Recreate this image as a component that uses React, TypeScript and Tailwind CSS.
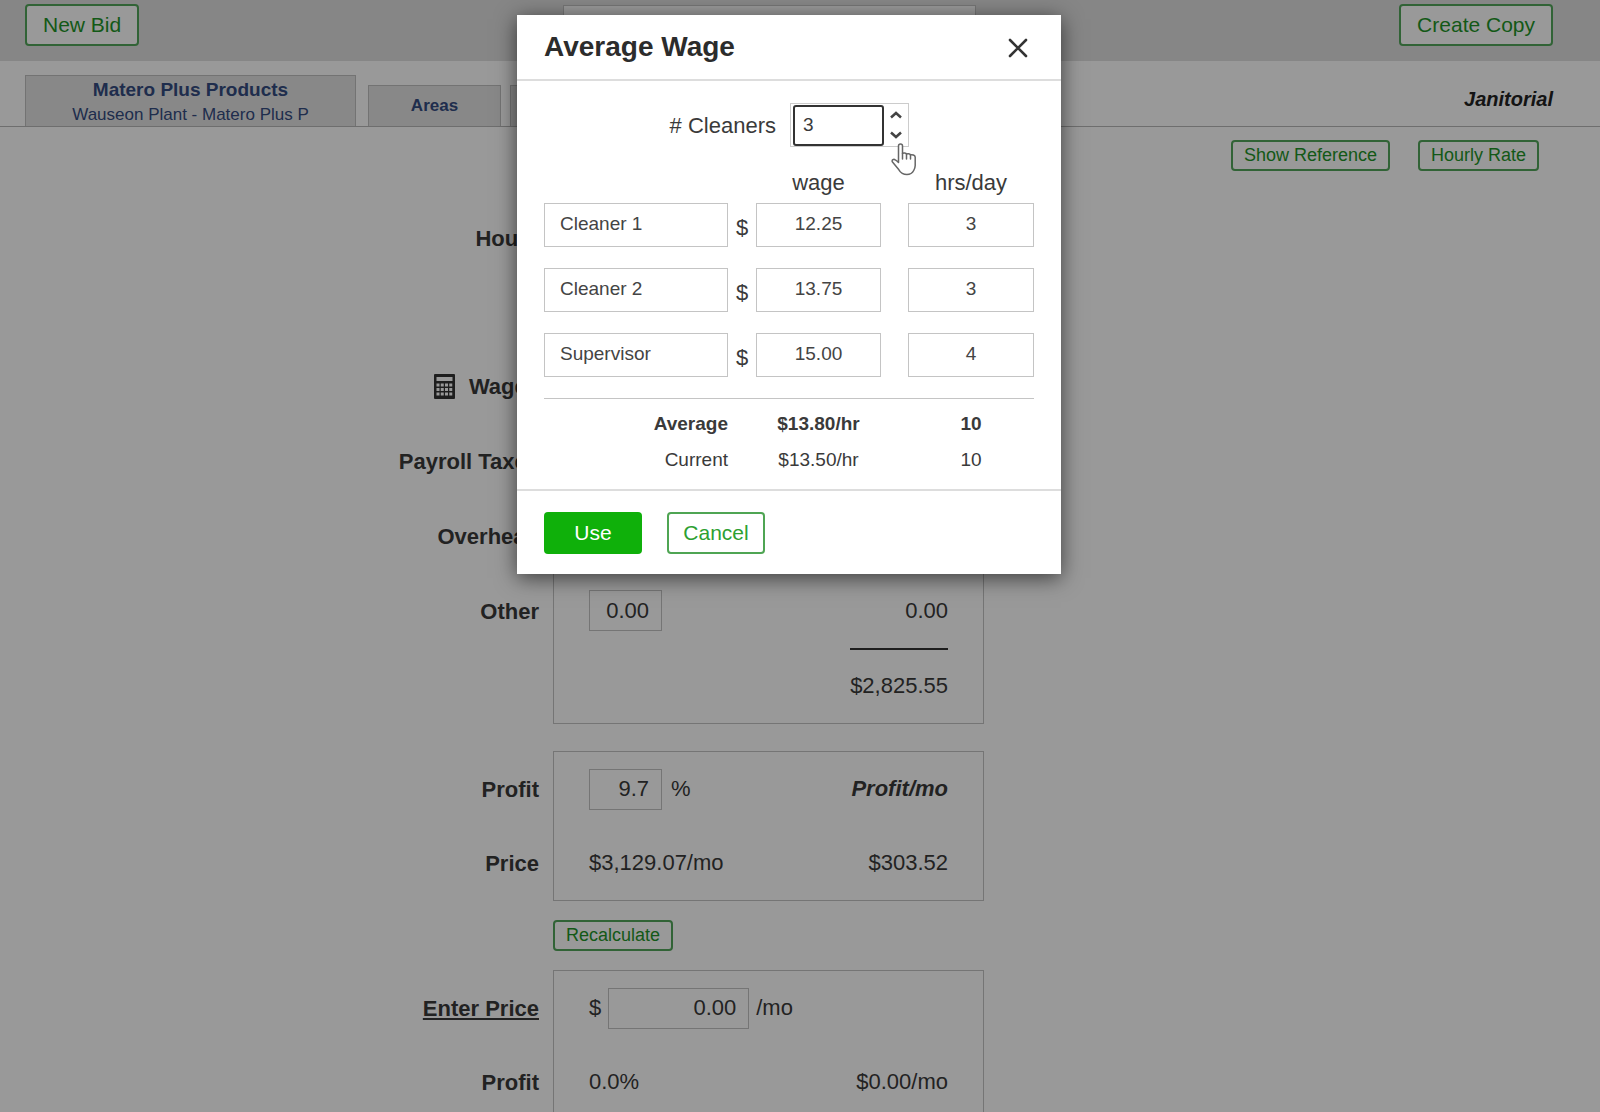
import React from "react";

const outline =
  "rounded border-2 border-[#53a65a] text-[#1f9428] bg-white font-normal whitespace-nowrap";

function SmallButton({ children }: { children: React.ReactNode }) {
  return <button className={`${outline} h-[31px] px-[11px] pb-[2px] text-[18px] leading-[24px]`}>{children}</button>;
}

function LargeButton({ children }: { children: React.ReactNode }) {
  return <button className={`${outline} h-[42px] px-4 text-[21px] leading-[30px]`}>{children}</button>;
}

function CalculatorIcon() {
  return (
    <svg width="21" height="25" viewBox="0 0 21 25" aria-hidden="true">
      <rect width="21" height="25" rx="1" fill="#333" />
      <g fill="#fff">
        <rect x="2.500" y="3" width="16" height="4" />
        {[9.5, 14, 18.5].map((y) =>
          [2.5, 6.75, 11, 15.25].map((x) => <rect key={`${x}-${y}`} x={x} y={y} width="3" height="3" />)
        )}
      </g>
    </svg>
  );
}

function Section({ labels, children }: { labels: React.ReactNode; children: React.ReactNode }) {
  return (
    <section className="grid grid-cols-[1fr_431px_1fr] pr-[63px]">
      <div className="flex flex-col py-px pr-[14px] text-right font-bold">{labels}</div>
      <div className="flex flex-col border border-[#c4c4c4] px-[35px]">{children}</div>
    </section>
  );
}

const boxInput = "h-[41px] border border-[#c4c4c4] bg-white px-3 text-right";

function Row({ children }: { children?: React.ReactNode }) {
  return <div className="flex h-[74px] items-center justify-between">{children}</div>;
}

function TallRow({ children }: { children?: React.ReactNode }) {
  return <div className="flex h-[75px] items-center justify-between">{children}</div>;
}

function BidPage() {
  return (
    <div className="text-[22px] leading-[30px] text-[#3a3a3a]">
      <header className="flex justify-between bg-[#dfdfdf] pt-1 pr-[47px] pb-[15px] pl-[25px]">
        <LargeButton>New Bid</LargeButton>
        <div className="mt-px w-[413px] border border-[#c4c4c4] bg-white" />
        <LargeButton>Create Copy</LargeButton>
      </header>

      <nav className="flex h-[66px] items-end border-b border-[#b8b8b8] pr-[47px] pl-[25px]">
        <a href="#bid" className="flex h-[51px] w-[331px] flex-col items-center border border-b-0 border-[#c0c0c0] bg-[#e3e3e3] text-[#344b80]">
          <span className="text-[19px] leading-[28px] font-bold">Matero Plus Products</span>
          <span className="text-[17px] leading-[22px] whitespace-nowrap">Wauseon Plant - Matero Plus P</span>
        </a>
        <a href="#areas" className="ml-3 flex h-[41px] w-[133px] items-center justify-center border border-b-0 border-[#c0c0c0] bg-[#e3e3e3] text-[17px] font-bold text-[#344b80]">
          Areas
        </a>
        <div className="ml-[9px] h-[41px] w-[133px] border border-b-0 border-[#c0c0c0] bg-[#e3e3e3]" />
        <span className="mb-3 ml-auto text-[20px] font-bold text-[#222] italic">Janitorial</span>
      </nav>

      <div className="flex justify-end gap-7 pt-[13px] pr-[61px] pb-[26px]">
        <SmallButton>Show Reference</SmallButton>
        <SmallButton>Hourly Rate</SmallButton>
      </div>

      <Section
        labels={
          <>
            <span className="h-[75px] pt-[26px]">Hours</span>
            <span className="h-[75px]" />
            <span className="flex h-[75px] items-center justify-end gap-[14px] pt-[2px]">
              <CalculatorIcon />
              Wages
            </span>
            <span className="h-[75px] pt-6">Payroll Taxes</span>
            <span className="h-[75px] pt-6">Overhead</span>
            <label htmlFor="other" className="h-[75px] pt-6">Other</label>
          </>
        }
      >
        <TallRow />
        <TallRow />
        <TallRow />
        <TallRow />
        <TallRow />
        <TallRow>
          <input id="other" className={`${boxInput} w-[73px]`} defaultValue="0.00" />
          <span>0.00</span>
        </TallRow>
        <div className="flex h-[75px] flex-col items-end">
          <div className="h-[2px] w-[98px] bg-[#333]" />
          <span className="mt-[21px]">$2,825.55</span>
        </div>
      </Section>

      <div className="h-[27px]" />

      <Section
        labels={
          <>
            <label htmlFor="profit" className="h-[74px] pt-[23px]">Profit</label>
            <span className="h-[74px] pt-[23px]">Price</span>
          </>
        }
      >
        <Row>
          <span className="flex items-center gap-[9px]">
            <input id="profit" className={`${boxInput} w-[73px]`} defaultValue="9.7" />%
          </span>
          <span className="font-bold italic">Profit/mo</span>
        </Row>
        <Row>
          <span>$3,129.07/mo</span>
          <span>$303.52</span>
        </Row>
      </Section>

      <div className="grid grid-cols-[1fr_431px_1fr] py-[19px] pr-[63px]">
        <div className="col-start-2 flex">
          <SmallButton>Recalculate</SmallButton>
        </div>
      </div>

      <Section
        labels={
          <>
            <label htmlFor="price" className="h-[74px] pt-[23px] underline">Enter Price</label>
            <span className="h-[74px] pt-[23px]">Profit</span>
          </>
        }
      >
        <Row>
          <span className="flex items-center gap-[7px]">
            $
            <input id="price" className={`${boxInput} w-[141px]`} defaultValue="0.00" />
            /mo
          </span>
        </Row>
        <Row>
          <span>0.0%</span>
          <span>$0.00/mo</span>
        </Row>
      </Section>
    </div>
  );
}

const cleaners = [
  { name: "Cleaner 1", wage: "12.25", hours: "3" },
  { name: "Cleaner 2", wage: "13.75", hours: "3" },
  { name: "Supervisor", wage: "15.00", hours: "4" },
];

const cellInput = "block h-11 w-full border border-[#c4c4c4] bg-white pb-[2px] text-[#444]";

function AverageWageDialog() {
  return (
    <div role="dialog" aria-labelledby="dialog-title" className="w-[544px] bg-white text-[#3a3a3a] shadow-[0_4px_20px_rgba(0,0,0,0.6)]">
      <div className="flex h-[66px] items-center justify-between border-b-2 border-[#ddd] pr-[33px] pl-[27px]">
        <h2 id="dialog-title" className="text-[28px] leading-[36px] font-bold text-[#2c2c2c]">Average Wage</h2>
        <button aria-label="Close" className="pt-[2px]">
          <svg width="20" height="20" viewBox="0 0 20 20" fill="none" stroke="#333" strokeWidth="2.600" strokeLinecap="round">
            <path d="M2 2 18 18M18 2 2 18" />
          </svg>
        </button>
      </div>

      <div className="px-[27px] pt-[22px] pb-[11px]">
        <div className="flex items-center justify-end gap-[14px] pr-[125px] text-[22px]">
          <label htmlFor="count">#&nbsp;Cleaners</label>
          <div className="relative flex h-[44px] w-[119px] items-center border border-[#ccc] pl-[2px]">
            <input id="count" className="h-[41px] w-[91px] rounded-[3px] border-2 border-[#333] px-2 text-[19px]" defaultValue="3" />
            <div className="flex flex-1 flex-col items-center gap-[6px]">
              <button aria-label="More cleaners" className="flex h-[14px] items-center">
                <svg width="12" height="8" viewBox="0 0 12 8" fill="none" stroke="#444" strokeWidth="2.500">
                  <path d="M1 6.500 6 2l5 4.500" />
                </svg>
              </button>
              <button aria-label="Fewer cleaners" className="flex h-[14px] items-center">
                <svg width="12" height="8" viewBox="0 0 12 8" fill="none" stroke="#444" strokeWidth="2.500">
                  <path d="M1 1.500 6 6l5-4.500" />
                </svg>
              </button>
            </div>
            <svg className="absolute top-[39px] left-[100px]" width="26" height="33" viewBox="0 0 26 33" fill="#fff" stroke="#666" strokeWidth="1.500" strokeLinejoin="round" strokeLinecap="round">
              <path d="M7.500 19.500V3a2 2 0 0 1 4 0v7.500c.7-.8 3.700-.7 4 .6.700-.7 3.500-.5 4 .8 1.500-.6 4.500.2 4.700 2.200v8.400c0 2-.7 3.500-1.500 5-1.500 3-3.500 4-6.800 4-4 0-6.200-1.600-8-4.700L1.300 18.800c-.7-1.800 1.200-3.100 3-2 1.400.8 2.300 1.700 3.200 2.700Z" />
              <path d="M11.500 10.500V16M15.500 11.100V16M19.500 11.900V16" fill="none" />
            </svg>
          </div>
        </div>

        <table className="w-full table-fixed border-collapse text-[19px] leading-[26px]">
          <colgroup>
            <col className="w-[184px]" />
            <col className="w-[28px]" />
            <col className="w-[125px]" />
            <col className="w-[27px]" />
            <col className="w-[126px]" />
          </colgroup>
          <thead>
            <tr className="h-[56px] text-[22px]">
              <td colSpan={2} />
              <th scope="col" className="pt-4 font-normal">wage</th>
              <td />
              <th scope="col" className="pt-4 font-normal">hrs/day</th>
            </tr>
          </thead>
          <tbody>
            {cleaners.map((c) => (
              <tr key={c.name} className="h-[65px] align-top">
                <td>
                  <input aria-label="Name" className={`${cellInput} px-[15px]`} defaultValue={c.name} />
                </td>
                <td className="pt-3 text-center text-[22px]">$</td>
                <td>
                  <input aria-label={`${c.name} wage`} className={`${cellInput} text-center`} defaultValue={c.wage} />
                </td>
                <td />
                <td>
                  <input aria-label={`${c.name} hours per day`} className={`${cellInput} text-center`} defaultValue={c.hours} />
                </td>
              </tr>
            ))}
          </tbody>
          <tfoot>
            <tr className="h-[44px] border-t border-[#c4c4c4] text-center font-bold">
              <th scope="row" className="pt-[7px] text-right">Average</th>
              <td />
              <td className="pt-[7px]">$13.80/hr</td>
              <td />
              <td className="pt-[7px]">10</td>
            </tr>
            <tr className="h-[36px] text-center">
              <th scope="row" className="text-right font-normal">Current</th>
              <td />
              <td>$13.50/hr</td>
              <td />
              <td>10</td>
            </tr>
          </tfoot>
        </table>
      </div>

      <div className="flex gap-[25px] border-t-2 border-[#ddd] px-[27px] pt-[21px] pb-5 text-[21px]">
        <button className="h-[42px] w-[98px] rounded bg-[#0fb00a] text-white">Use</button>
        <button className="h-[42px] w-[98px] rounded border-2 border-[#4fa553] text-[#2da031]">Cancel</button>
      </div>
    </div>
  );
}

export default function App() {
  return (
    <main className="relative h-screen overflow-hidden bg-white font-['Liberation_Sans',Arial,sans-serif]">
      <BidPage />
      <div className="absolute inset-0 flex items-start justify-center bg-black/40 pt-[15px] pr-[22px]">
        <AverageWageDialog />
      </div>
    </main>
  );
}
